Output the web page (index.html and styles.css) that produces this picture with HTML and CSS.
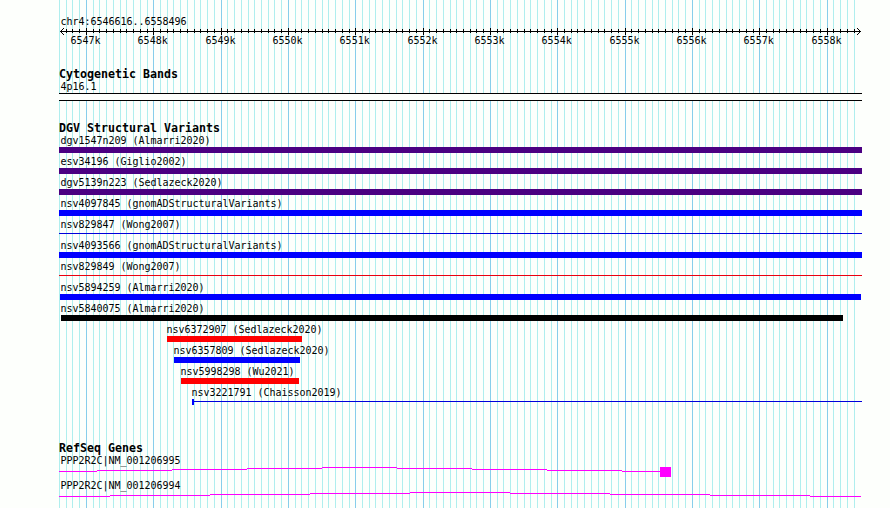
FILE: index.html
```html
<!DOCTYPE html>
<html lang="en">
<head>
<meta charset="utf-8">
<title>chr4:6546616..6558496</title>
<link rel="stylesheet" href="styles.css">
</head>
<body>
<svg class="grid" width="890" height="508" aria-hidden="true">
  <path id="grid-minor" class="grid-minor"/>
  <path id="grid-major" class="grid-major"/>
</svg>
<main class="browser">
  <header class="ruler">
    <div class="label">chr4:6546616..6558496</div>
    <svg class="axis" width="803" height="21" viewBox="59 27 803 21">
      <path class="ink" d="M60 31h801v1h-801zM61 30h1v1h-1zM62 29h1v1h-1zM63 28h1v1h-1zM61 32h1v1h-1zM62 33h1v1h-1zM63 34h1v1h-1zM859 30h1v1h-1zM858 29h1v1h-1zM857 28h1v1h-1zM859 32h1v1h-1zM858 33h1v1h-1zM857 34h1v1h-1z"/>
      <path id="ticks" class="ink"/>
      <g class="tick-text">
        <text x="70.4" y="44">6547k</text><text x="137.6" y="44">6548k</text><text x="205.4" y="44">6549k</text>
        <text x="272.4" y="44">6550k</text><text x="339.6" y="44">6551k</text><text x="407.4" y="44">6552k</text>
        <text x="474.4" y="44">6553k</text><text x="541.6" y="44">6554k</text><text x="609.4" y="44">6555k</text>
        <text x="676.4" y="44">6556k</text><text x="743.6" y="44">6557k</text><text x="811.4" y="44">6558k</text>
      </g>
    </svg>
  </header>

  <section class="track cyto">
    <h2>Cytogenetic Bands</h2>
    <div class="label">4p16.1</div>
    <div class="band"></div>
  </section>

  <section class="track variants">
    <h2>DGV Structural Variants</h2>
    <div class="row"><div class="label">dgv1547n209 (Almarri2020)</div><div class="bar indigo"></div></div>
    <div class="row"><div class="label">esv34196 (Giglio2002)</div><div class="bar indigo"></div></div>
    <div class="row"><div class="label">dgv5139n223 (Sedlazeck2020)</div><div class="bar indigo"></div></div>
    <div class="row"><div class="label">nsv4097845 (gnomADStructuralVariants)</div><div class="bar blue"></div></div>
    <div class="row"><div class="label">nsv829847 (Wong2007)</div><div class="bar thin blue"></div></div>
    <div class="row"><div class="label">nsv4093566 (gnomADStructuralVariants)</div><div class="bar blue"></div></div>
    <div class="row"><div class="label">nsv829849 (Wong2007)</div><div class="bar thin red"></div></div>
    <div class="row"><div class="label">nsv5894259 (Almarri2020)</div><div class="bar blue v-5894259"></div></div>
    <div class="row"><div class="label">nsv5840075 (Almarri2020)</div><div class="bar black v-5840075"></div></div>
    <div class="row v-6372907"><div class="label">nsv6372907 (Sedlazeck2020)</div><div class="bar red"></div></div>
    <div class="row v-6357809"><div class="label">nsv6357809 (Sedlazeck2020)</div><div class="bar blue"></div></div>
    <div class="row v-5998298"><div class="label">nsv5998298 (Wu2021)</div><div class="bar red"></div></div>
    <div class="row v-3221791"><div class="label">nsv3221791 (Chaisson2019)</div><div class="split"><div class="bar blue stub"></div><div class="bar thin blue rest"></div></div></div>
  </section>

  <section class="track genes">
    <h2>RefSeq Genes</h2>
    <div class="label">PPP2R2C|NM_001206995</div>
    <svg class="gene" width="803" height="12" viewBox="59 467 803 12">
      <path d="M59 471h38v1h-38zM97 470h75v1h-75zM172 469h75v1h-75zM247 468h75v1h-75zM322 467h75v1h-75zM397 468h75v1h-75zM472 469h75v1h-75zM547 470h75v1h-75zM622 471h38v1h-38zM660 467h11v10h-11z"/>
    </svg>
    <div class="label">PPP2R2C|NM_001206994</div>
    <svg class="gene" width="803" height="12" viewBox="59 492 803 12">
      <path d="M59 496h51v1h-51zM110 495h100v1h-100zM210 494h100v1h-100zM310 493h100v1h-100zM410 492h100v1h-100zM510 493h100v1h-100zM610 494h100v1h-100zM710 495h100v1h-100zM810 496h51v1h-51z"/>
    </svg>
  </section>
</main>
<script src="grid.js"></script>
</body>
</html>
```
FILE: styles.css
```css
body {
  margin: 0;
  width: 890px;
  height: 508px;
  overflow: hidden;
  position: relative;
  background: #fdfffc;
  color: #000;
  font: 10px/13px "DejaVu Sans Mono", "Liberation Mono", monospace;
}
svg { display: block; shape-rendering: crispEdges; }
.grid { position: absolute; inset: 0; }
.grid-minor { fill: #afeeee; }
.grid-major { fill: #87ceeb; }
.ink { fill: #000; }
.browser { position: relative; width: 803px; padding: 15px 0 0 59px; }
.label { height: 13px; padding-left: 1.4px; white-space: pre; letter-spacing: -0.02px; }
.ruler { height: 53px; }
.axis { margin-top: -1px; }
.tick-text { font-size: 10px; }
h2 {
  margin: 0;
  height: 12px;
  font-size: 11.63px;
  line-height: 12px;
  font-weight: bold;
  white-space: pre;
}
.cyto { height: 54px; }
.band { height: 6px; border: solid #000; border-width: 1px 0; background: #fdfffc; }
.variants { height: 320px; }
.row { height: 21px; }
.bar { height: 6px; }
.bar.thin { height: 1px; margin-top: 2px; }
.indigo { background: #4b0082; }
.blue { background: #00f; }
.red { background: #f00; }
.thin.blue { background: #0000dc; }
.thin.red { background: #eb0010; }
.black { background: #000; }
.v-5894259 { margin: 0 1px; }
.v-5840075 { margin-left: 2px; width: 782px; }
.v-6372907 { margin-left: 108px; width: 135px; }
.v-6357809 { margin-left: 115px; width: 126px; }
.v-5998298 { margin-left: 122px; width: 118px; }
.v-3221791 { margin-left: 133px; }
.row[class*="v-"] .label { padding-left: 0; margin-left: -0.6px; }
.split { display: flex; }
.stub { width: 2px; }
.rest { flex: 1; }
.genes { height: 62px; }
.gene { fill: #f0f; }
```
FILE: grid.js
```js
// 100 bp grid: 800 px span the 11881 bp region.
const step = 800 / 118.81;
let minor = "", major = "", ticks = "";
for (let i = -4; i <= 114; i++) {
  const x = Math.floor(86.4 + i * step);
  if (i % 10 === 0) {
    major += `M${x} 0h1v508h-1z`;
    ticks += `M${x} 28h1v7h-1z`;
  } else {
    minor += `M${x} 0h1v508h-1z`;
    if (i > -4) ticks += `M${x} 29h1v4h-1z`;
  }
}
document.getElementById("grid-minor").setAttribute("d", minor);
document.getElementById("grid-major").setAttribute("d", major);
document.getElementById("ticks").setAttribute("d", ticks);
```
